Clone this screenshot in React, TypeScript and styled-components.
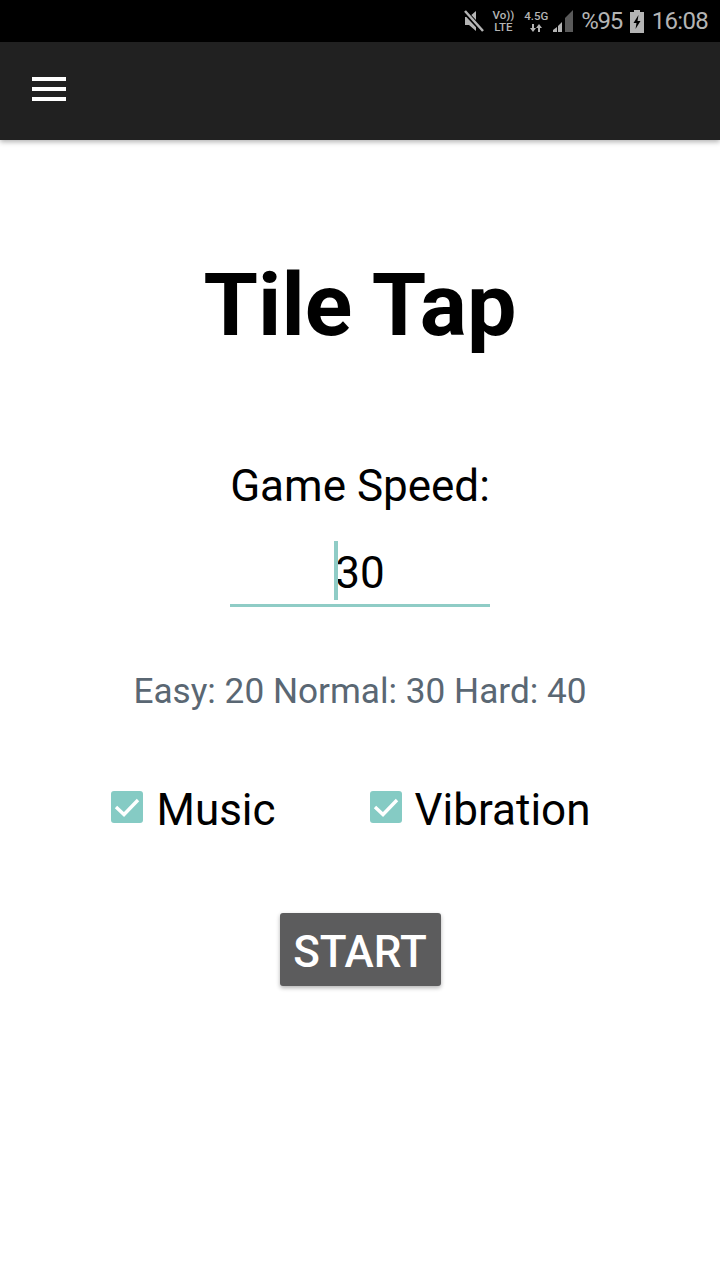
import React from 'react';
import styled, { createGlobalStyle } from 'styled-components';

const GlobalStyle = createGlobalStyle`
    html, body {
        margin: 0;
        padding: 0;
        background: #fff;
        font-family: Roboto, "Liberation Sans", sans-serif;
    }
    * {
        box-sizing: border-box;
    }
`;

const Page = styled.div`
    width: 720px;
    height: 1280px;
    overflow: hidden;
    background: #fff;
`;

const StatusBar = styled.div`
    height: 42px;
    background: #000;
    display: flex;
    align-items: center;
    justify-content: flex-end;
    padding-right: 12px;
    color: #b4b4b4;
`;

const StatusIcon = styled.svg<{ $left: number }>`
    display: block;
    flex: none;
    margin-left: ${(p) => p.$left}px;
`;

const NetLabel = styled.div<{ $left: number }>`
    display: flex;
    flex-direction: column;
    align-items: center;
    font-size: 11.5px;
    line-height: 12px;
    font-weight: 500;
    margin-left: ${(p) => p.$left}px;
`;

const NetArrows = styled.svg`
    display: block;
    margin-top: 2px;
`;

const StatusText = styled.span<{ $left: number; $spacing: number }>`
    font-size: 24px;
    letter-spacing: ${(p) => p.$spacing}px;
    line-height: 42px;
    margin-left: ${(p) => p.$left}px;
`;

const Toolbar = styled.header`
    height: 98px;
    background: #212121;
    display: flex;
    align-items: center;
    padding-left: 32px;
    box-shadow: 0 2px 5px rgba(0, 0, 0, 0.3);
`;

const MenuButton = styled.div`
    width: 34px;
    margin-bottom: 4px;
    display: flex;
    flex-direction: column;
    gap: 6px;
`;

const MenuLine = styled.span`
    display: block;
    height: 4px;
    background: #fff;
`;

const Main = styled.main`
    display: flex;
    flex-direction: column;
    align-items: center;
    padding-top: 115px;
`;

const Title = styled.h1`
    margin: 0;
    font-size: 88px;
    line-height: 100px;
    font-weight: 700;
    color: #000;
`;

const SpeedLabel = styled.div`
    margin-top: 105px;
    font-size: 44px;
    line-height: 52px;
    color: #000;
`;

const SpeedField = styled.div`
    margin-top: 29px;
    width: 260px;
    height: 66px;
    border-bottom: 3px solid #8fccc6;
    display: flex;
    justify-content: center;
`;

const SpeedValue = styled.span`
    position: relative;
    font-size: 44px;
    line-height: 64px;
    color: #000;
`;

const Caret = styled.span`
    position: absolute;
    left: -1px;
    top: 0;
    width: 4px;
    height: 59px;
    background: #8fccc6;
`;

const Hint = styled.div`
    margin-top: 62px;
    font-size: 35.2px;
    line-height: 44px;
    color: #5a6773;
`;

const Options = styled.div`
    margin-top: 70px;
    margin-right: 18px;
    display: flex;
    gap: 94px;
`;

const Option = styled.label`
    display: flex;
    align-items: center;
    gap: 13px;
    font-size: 44px;
    line-height: 54px;
    color: #000;
`;

const CheckBox = styled.span`
    width: 32px;
    height: 32px;
    border-radius: 3px;
    background: #85cbc4;
    margin-top: -7px;
`;

const CheckMark = styled.svg`
    display: block;
`;

const StartButton = styled.button`
    margin-top: 76px;
    width: 161px;
    height: 73px;
    border: none;
    border-radius: 3px;
    background: #5c5c5d;
    color: #fff;
    font-family: inherit;
    font-size: 44px;
    font-weight: 500;
    padding: 4px 0 0;
    box-shadow: 0 2px 4px rgba(0, 0, 0, 0.3);
`;

const Check = () => (
    <CheckMark width="32" height="32" viewBox="0 0 32 32" fill="none">
        <path d="M5 16l8 7.5L27 9" stroke="#fff" strokeWidth="3.4" />
    </CheckMark>
);

const App: React.FC = () => (
    <Page>
        <GlobalStyle />
        <StatusBar>
            <StatusIcon $left={0} width="20" height="24" viewBox="0 0 20 24">
                <path d="M1 8h4l7-6v20l-7-6H1z" fill="#b4b4b4" />
                <path d="M1 3l18 19" stroke="#000" strokeWidth="5" />
                <path d="M1 2l18 20" stroke="#b4b4b4" strokeWidth="2.5" />
            </StatusIcon>
            <NetLabel $left={9}>
                <span>Vo))</span>
                <span>LTE</span>
            </NetLabel>
            <NetLabel $left={10}>
                <span>4.5G</span>
                <NetArrows width="12" height="8" viewBox="0 0 12 8">
                    <path d="M2 0h2v4h2L3 8 0 4h2z" fill="#b4b4b4" />
                    <path d="M8 8h2V4h2L9 0 6 4h2z" fill="#b4b4b4" />
                </NetArrows>
            </NetLabel>
            <StatusIcon $left={5} width="20" height="22" viewBox="0 0 20 22">
                <path d="M0 22h4v-5l-4 3z" fill="#b4b4b4" />
                <path d="M5 22h4V12l-4 4z" fill="#b4b4b4" />
                <path d="M12 22h8V0l-8 8z" fill="#5a5a5a" />
            </StatusIcon>
            <StatusText $left={8} $spacing={-1.4}>%95</StatusText>
            <StatusIcon $left={8} width="14" height="23" viewBox="0 0 14 23">
                <path d="M4 0h6v2h4v21H0V2h4z" fill="#b4b4b4" />
                <path d="M8.5 5L3.5 13h3l-1 6 5-8h-3z" fill="#000" />
            </StatusIcon>
            <StatusText $left={8} $spacing={-0.7}>16:08</StatusText>
        </StatusBar>
        <Toolbar>
            <MenuButton>
                <MenuLine />
                <MenuLine />
                <MenuLine />
            </MenuButton>
        </Toolbar>
        <Main>
            <Title>Tile Tap</Title>
            <SpeedLabel>Game Speed:</SpeedLabel>
            <SpeedField>
                <SpeedValue>
                    <Caret />
                    30
                </SpeedValue>
            </SpeedField>
            <Hint>Easy: 20 Normal: 30 Hard: 40</Hint>
            <Options>
                <Option>
                    <CheckBox><Check /></CheckBox>
                    Music
                </Option>
                <Option>
                    <CheckBox><Check /></CheckBox>
                    Vibration
                </Option>
            </Options>
            <StartButton>START</StartButton>
        </Main>
    </Page>
);

export default App;
